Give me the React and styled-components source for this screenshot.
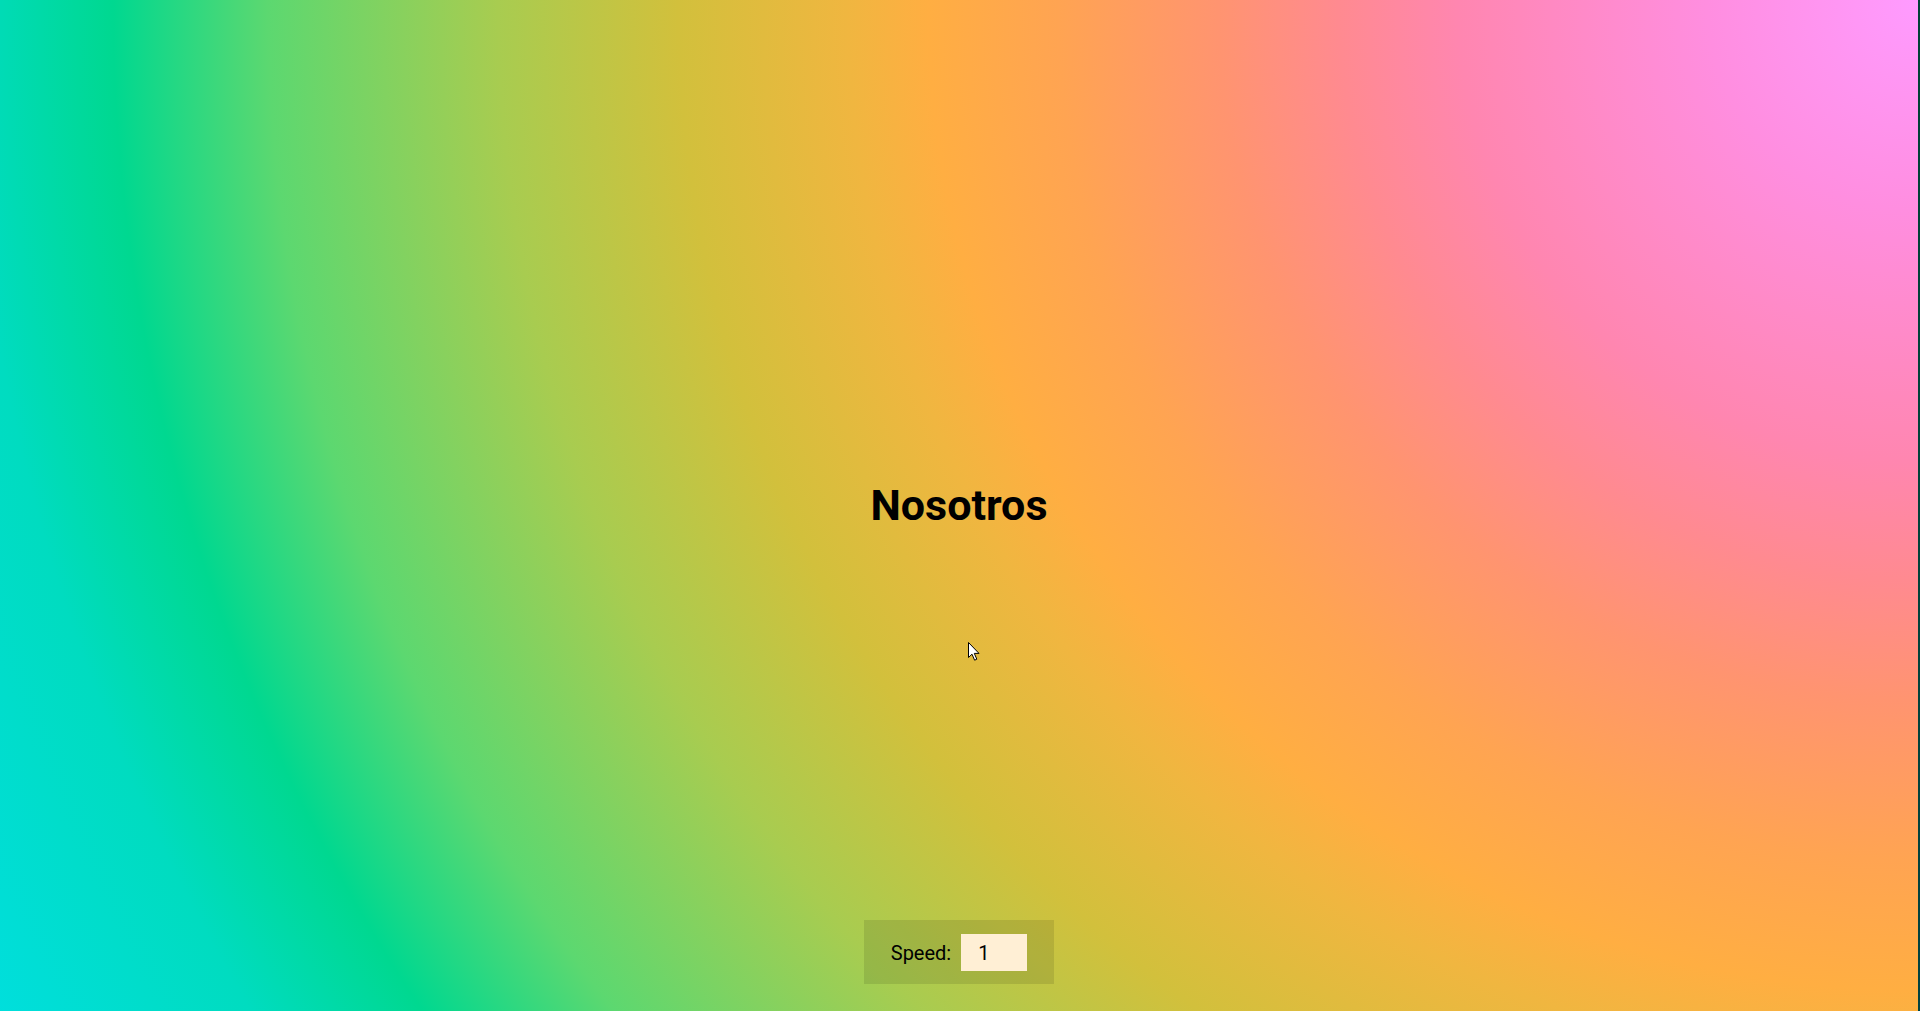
import React, { useState } from 'react';
import styled, { createGlobalStyle } from 'styled-components';

const GlobalStyle = createGlobalStyle`
  html, body {
    margin: 0;
    padding: 0;
    overflow: hidden;
  }
  body {
    font-family: Roboto, 'Liberation Sans', sans-serif;
    color: #000;
  }
`;

const Stage = styled.div`
  position: relative;
  width: 100vw;
  height: 100vh;
  box-sizing: border-box;
  border-right: 2px solid rgba(0, 0, 0, 0.7);
  display: grid;
  grid-template-rows: 1fr auto 1fr;
  justify-items: center;
  background: radial-gradient(
    circle at 100% 0%,
    #ff9bff 0px,
    #ff8ee0 210px,
    #ff86b0 460px,
    #ff8a90 580px,
    #ff9470 700px,
    #ffa452 860px,
    #ffae42 990px,
    #f0b640 1070px,
    #d2c03c 1240px,
    #a8cc50 1420px,
    #5cd870 1650px,
    #00d890 1805px,
    #00dcc0 1950px,
    #00dfe0 2200px
  );
`;

const Title = styled.h1`
  grid-row: 2;
  margin: 0;
  font-size: 43px;
  font-weight: 700;
  line-height: 1;
`;

const Controls = styled.div`
  grid-row: 3;
  align-self: end;
  margin-bottom: 27px;
  display: flex;
  align-items: center;
  gap: 10px;
  padding: 14px 27px 13px 27px;
  background: rgba(0, 0, 0, 0.1);
  font-size: 20px;
`;

const SpeedInput = styled.input`
  width: 66px;
  height: 37px;
  box-sizing: border-box;
  border: none;
  outline: none;
  padding: 0 0 0 17px;
  background: #ffefd5;
  font-family: inherit;
  font-size: 20px;
  color: #000;
`;

const Cursor = styled.svg`
  position: absolute;
  left: 968px;
  top: 642px;
  pointer-events: none;
`;

function App() {
  const [speed, setSpeed] = useState(1);

  return (
    <>
      <GlobalStyle />
      <Stage>
        <Title>Nosotros</Title>
        <Controls>
          <span>Speed:</span>
          <SpeedInput value={speed} onChange={e => setSpeed(e.target.value)} />
        </Controls>
        <Cursor width="13" height="20" viewBox="0 0 13 20">
          <path d="M0.5 0.5 L0.5 15.5 L4 12.2 L6.6 18.2 L8.8 17.2 L6.3 11.4 L11 11.4 Z" fill="#fff" stroke="#000" strokeWidth="1" />
        </Cursor>
      </Stage>
    </>
  );
}

export default App;
